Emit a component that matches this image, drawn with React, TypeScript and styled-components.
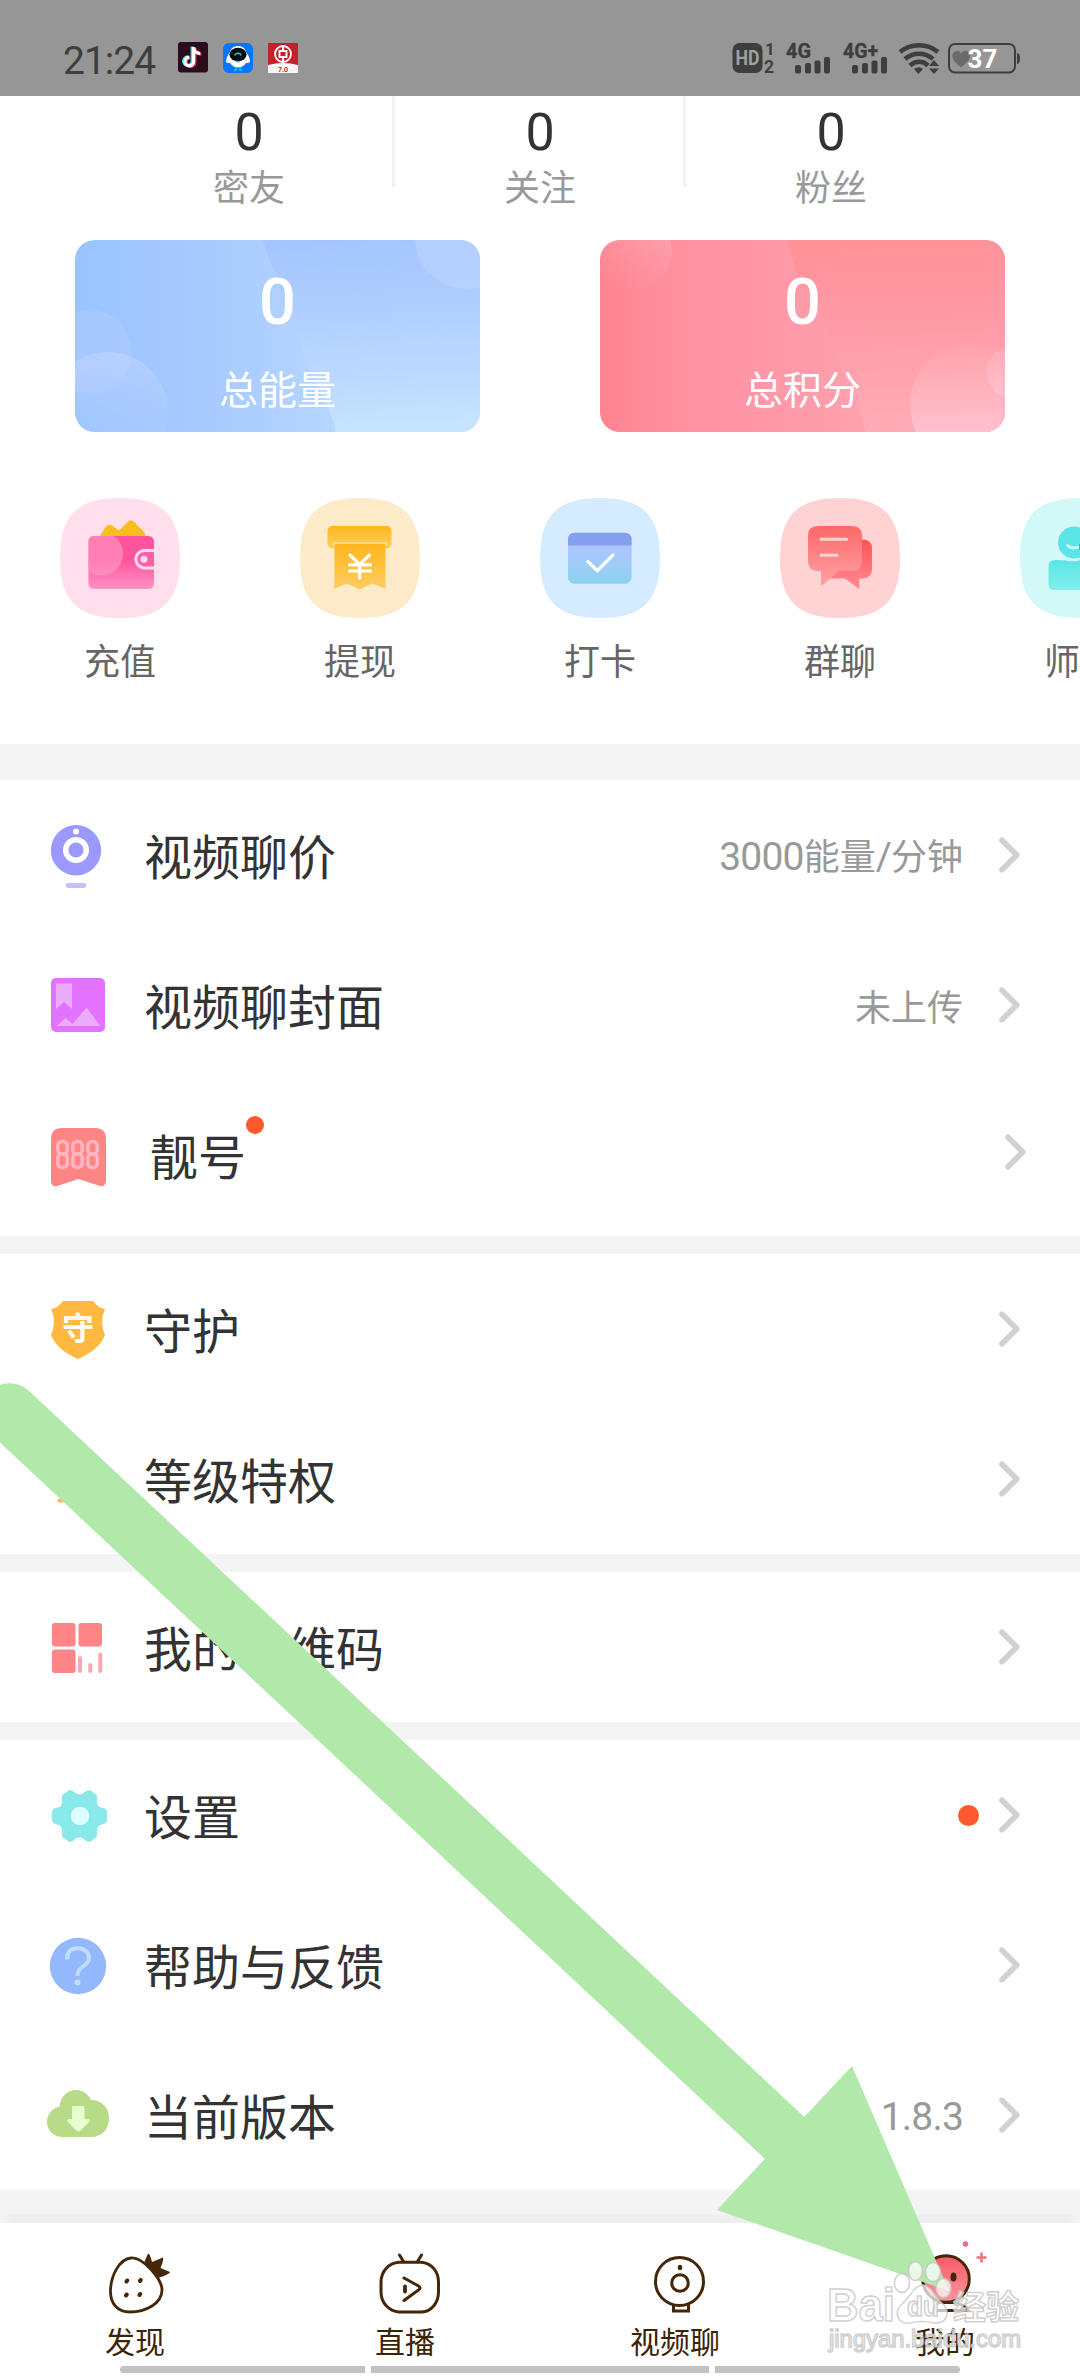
import React from "react";
import styled, { createGlobalStyle } from "styled-components";

const CJK = `"Noto Sans CJK SC", "Noto Sans", sans-serif`;
const LATIN = `Roboto, "Noto Sans CJK SC", sans-serif`;

const GlobalStyle = createGlobalStyle`
  html, body { margin: 0; padding: 0; background: #fff; }
  * { box-sizing: border-box; }
  body { font-family: ${CJK}; }
  svg { display: block; flex: none; }
`;

const Screen = styled.main`
  position: relative;
  width: 1080px;
  height: 2376px;
  display: flex;
  flex-direction: column;
  overflow: hidden;
  background: #fff;
`;

/* ---------- status bar ---------- */

const StatusBar = styled.header`
  display: flex;
  justify-content: space-between;
  height: 96px;
  flex: none;
  padding: 42px 60px 0 63px;
  background: #969696;
  color: #3e3e3e;
`;

const StatusGroup = styled.div<{ $gap: number }>`
  display: flex;
  align-items: flex-start;
  gap: ${(p) => p.$gap}px;
`;

const Clock = styled.span`
  width: 100px;
  font: 400 39px/38px ${LATIN};
  letter-spacing: -1px;
  white-space: nowrap;
`;

const StatusIcons = styled.div`
  display: flex;
  padding-top: 1px;
  svg { overflow: visible; }
`;

/* ---------- profile statistics ---------- */

const Stats = styled.section`
  display: flex;
  justify-content: center;
  height: 144px;
  flex: none;
`;

const Stat = styled.div`
  width: 291px;
  display: flex;
  flex-direction: column;
  align-items: center;
  background: linear-gradient(#f3f3f3, #f3f3f3) right top / 3px 91px no-repeat;
  &:last-child { background: none; }
`;

const StatValue = styled.span`
  height: 62px;
  margin-top: 6px;
  font: 400 52px/62px ${LATIN};
  color: #333;
`;

const StatLabel = styled.span`
  font-size: 36px;
  line-height: 42px;
  color: #999;
`;

/* ---------- balance cards ---------- */

const Cards = styled.section`
  display: flex;
  justify-content: space-between;
  padding: 0 75px;
  height: 192px;
  flex: none;
`;

const Card = styled.div`
  width: 405px;
  height: 192px;
  border-radius: 20px;
  overflow: hidden;
  display: grid;
  & > * { grid-area: 1 / 1; }
`;

const CardText = styled.div`
  z-index: 1;
  display: flex;
  flex-direction: column;
  align-items: center;
  color: #fff;
`;

const CardValue = styled.span`
  margin-top: 24px;
  font: 500 65px/77px ${LATIN};
`;

const CardLabel = styled.span`
  margin-top: 23px;
  font-size: 39px;
  line-height: 46px;
`;

/* ---------- shortcuts ---------- */

const Shortcuts = styled.section`
  display: flex;
  height: 312px;
  flex: none;
  padding-top: 66px;
  overflow: hidden;
`;

const Shortcut = styled.div`
  flex: none;
  width: 240px;
  display: flex;
  flex-direction: column;
  align-items: center;
  gap: 20px;
  font-size: 36px;
  line-height: 42px;
  color: #666;
`;

/* ---------- menu ---------- */

const Band = styled.div<{ $h: number }>`
  height: ${(p) => p.$h}px;
  flex: none;
  background: #f4f4f4;
`;

const Group = styled.section<{ $pad?: number }>`
  flex: none;
  padding-bottom: ${(p) => p.$pad ?? 0}px;
`;

const Row = styled.div<{ $shift?: number }>`
  height: 150px;
  display: flex;
  align-items: center;
  padding: 0 ${(p) => 60 - (p.$shift ?? 0)}px 0 45px;
`;

const RowIcon = styled.div`
  width: 66px;
  height: 66px;
  flex: none;
`;

const RowLabel = styled.span<{ $shift?: number }>`
  margin-left: ${(p) => 33 + (p.$shift ?? 0)}px;
  padding-bottom: 3px;
  font-size: 48px;
  line-height: 60px;
  color: #333;
  white-space: nowrap;
`;

const LabelDot = styled.i`
  align-self: flex-start;
  margin: 36px 0 0 0;
  width: 18px;
  height: 18px;
  border-radius: 50%;
  background: #ff5a2d;
`;

const Trail = styled.div`
  margin-left: auto;
  display: flex;
  align-items: center;
`;

const Value = styled.span`
  margin-right: 36px;
  font-size: 36px;
  line-height: 48px;
  color: #999;
  white-space: nowrap;
`;

const Num = styled.span`
  font-family: ${LATIN};
  font-size: 39px;
  letter-spacing: -0.8px;
`;

const Alert = styled.i`
  width: 21px;
  height: 21px;
  margin-right: 20px;
  border-radius: 50%;
  background: #ff5a2d;
`;

const ChevronBox = styled.div<{ $lift?: number }>`
  padding-bottom: ${(p) => p.$lift ?? 0}px;
`;

/* ---------- bottom navigation ---------- */

const NavShadow = styled.div`
  height: 8px;
  flex: none;
  background: linear-gradient(90deg, #f4f4f4, #eee 14px, #eee 1066px, #f4f4f4);
`;

const Nav = styled.nav`
  display: flex;
  height: 153px;
  flex: none;
`;

const Tab = styled.div`
  width: 270px;
  padding-top: 24px;
  display: flex;
  flex-direction: column;
  align-items: center;
  font-size: 30px;
  line-height: 36px;
  color: #3d2305;
  svg { margin: 0 0 3px 9px; overflow: visible; }
`;

const Indicator = styled.div`
  position: absolute;
  left: 120px;
  bottom: 3px;
  width: 840px;
  height: 7px;
  display: grid;
  grid-template-columns: 245px 338px 245px;
  gap: 6px;
  border-radius: 4px;
  overflow: hidden;
  i { background: #c2c2c2; }
`;

/* ---------- overlays ---------- */

const ArrowLayer = styled.svg`
  position: absolute;
  left: 0;
  top: 1370px;
`;

const WatermarkLayer = styled.svg`
  position: absolute;
  left: 820px;
  top: 2250px;
`;

/* ---------- drawings ---------- */

const DouyinIcon = () => (
  <svg width="30" height="31" viewBox="0 0 30 31">
    <rect width="30" height="30.500" rx="3" fill="#2b0b1c" />
    <g fill="none" strokeWidth="3.200">
      <path d="M15.200 5v14.500a4.300 4.300 0 1 1-4.300-4.300M15.200 6c.6 3.600 3 5.400 6.600 5.400" stroke="#2bf0ee" transform="translate(-1 -.4)" />
      <path d="M16 5v14.500a4.300 4.300 0 1 1-4.300-4.300M16 6c.6 3.600 3 5.400 6.600 5.400" stroke="#fb2c55" transform="translate(.8 .8)" />
      <path d="M15.600 5v14.500a4.300 4.300 0 1 1-4.300-4.300M15.600 6c.6 3.600 3 5.400 6.600 5.400" stroke="#fff" />
    </g>
  </svg>
);

const RobotIcon = () => (
  <svg width="30" height="31" viewBox="0 0 30 31">
    <rect y="1" width="30" height="30" rx="6" fill="#0875ff" />
    <path d="M7 10C8 6 11 4 15 4s7 2 8 6c3 4 4 7 4 10-1 1-3 1-4 1-2 3-5 4.500-8 4.500S9 24 7 21c-1 0-3 0-4-1 0-3 1-6 4-10z" fill="#fff" />
    <ellipse cx="15" cy="12.500" rx="8.600" ry="6.800" fill="#050a0d" />
    <path d="M12 13.500c.5-3 5.500-3 6 0" stroke="#20c4c9" strokeWidth="1.500" fill="none" />
    <path d="M13 19.500h4M13 25v2.500m4-2.500v2.500M11 28h3m2 0h3" stroke="#19c8d6" strokeWidth="1.600" />
  </svg>
);

const BankIcon = () => (
  <svg width="30" height="31" viewBox="0 0 30 31">
    <rect y="1" width="30" height="30" fill="#c3202b" />
    <path d="M0 23q15-4 30 0v8H0z" fill="#f5f5f5" />
    <circle cx="15" cy="12" r="8" fill="none" stroke="#fff" strokeWidth="1.900" />
    <path d="M15 4v4.500m0 7V20M11.500 9h7v6h-7z" fill="none" stroke="#fff" strokeWidth="1.900" />
    <text x="15" y="29.500" textAnchor="middle" fontFamily="Roboto, sans-serif" fontWeight="700" fontSize="7" fill="#b3323a">7.0</text>
  </svg>
);

const Signal = ({ x, label }: { x: number; label: string }) => (
  <g transform={`translate(${x} 0)`}>
    <text x="0" y="15" fontFamily="Roboto, sans-serif" fontWeight="700" fontSize="21" textLength={label.length > 2 ? 35 : 25} lengthAdjust="spacingAndGlyphs" stroke="#3e3e3e" strokeWidth="0.400">{label}</text>
    <rect x="9" y="22" width="6" height="8.500" rx="2" />
    <rect x="19" y="20" width="6" height="10.500" rx="2" />
    <rect x="28.500" y="17.500" width="6" height="13" rx="2" />
    <rect x="38" y="14" width="6" height="16.500" rx="2" />
  </g>
);

const Connectivity = () => (
  <svg width="288" height="31" viewBox="0 0 288 31" fill="#3e3e3e">
    <rect x="0.500" width="30" height="30" rx="7" />
    <text x="15.500" y="22" textAnchor="middle" fontFamily="Roboto, sans-serif" fontWeight="700" fontSize="19.500" fill="#a0a0a0" textLength="24" lengthAdjust="spacingAndGlyphs">HD</text>
    <text x="33" y="12" fontFamily="Roboto, sans-serif" fontWeight="700" fontSize="17">1</text>
    <text x="32" y="29.500" fontFamily="Roboto, sans-serif" fontWeight="700" fontSize="17.500">2</text>
    <Signal x={54} label="4G" />
    <Signal x={111} label="4G+" />
    <g fill="none" stroke="#3e3e3e" strokeWidth="4.600">
      <path d="M168 9c11-9 27-9 38 0" />
      <path d="M173 16c8-7 20-7 28 0" />
      <path d="M178 22.500c5.500-5 13-5 18 0" />
    </g>
    <path d="M182 26q5-3.500 9 0l-4.500 5zM197 23l5-6 5 6zM197 25.500l5 5.500 5-5.500z" />
    <rect x="217" y="1" width="66" height="28.500" rx="6" fill="none" stroke="#3e3e3e" strokeWidth="2" />
    <path d="M285 10q3 .5 3 5.500t-3 5.500z" />
    <path d="M229 24c-11-7-10-14-5-16q4-1 5 3 2-4 6-3c5 2 5 9-6 16z" fill="#6b6b6b" />
    <text x="235.500" y="24.500" fontFamily="Roboto, sans-serif" fontWeight="700" fontSize="26" fill="#fff">37</text>
  </svg>
);

const EnergyArt = () => (
  <svg width="405" height="192" viewBox="0 0 405 192">
    <defs>
      <linearGradient id="eL" x1="0" x2=".65"><stop stopColor="#98c4ff" /><stop offset=".35" stopColor="#a4c7ff" /><stop offset="1" stopColor="#b5d6ff" /></linearGradient>
      <linearGradient id="eR" x1="0" y1="0" x2=".06" y2="1"><stop stopColor="#a3c5ff" /><stop offset=".45" stopColor="#b1d0ff" /><stop offset="1" stopColor="#c5e2ff" /></linearGradient>
      <linearGradient id="eC" x1="0" y1="0" x2="0" y2="1"><stop stopColor="#c5d8ff" stopOpacity=".5" /><stop offset="1" stopColor="#b3cdff" stopOpacity="0.050" /></linearGradient>
    </defs>
    <rect width="405" height="192" fill="url(#eL)" />
    <path d="M188 0H405V192H261C255 160 230 130 221 90C214 60 197 35 188 0z" fill="url(#eR)" />
    <circle cx="15" cy="112" r="42" fill="#b4ccff" fillOpacity=".45" />
    <circle cx="33" cy="172" r="60" fill="url(#eC)" />
    <circle cx="392" cy="-4" r="53" fill="#bbd6ff" fillOpacity=".55" />
  </svg>
);

const PointsArt = () => (
  <svg width="405" height="192" viewBox="0 0 405 192">
    <defs>
      <linearGradient id="pL" x1="0" x2=".7"><stop stopColor="#ff8490" /><stop offset=".35" stopColor="#ff92a2" /><stop offset="1" stopColor="#ffa2ae" /></linearGradient>
      <linearGradient id="pR" x1="0" y1="0" x2=".04" y2="1"><stop stopColor="#ff9097" /><stop offset=".5" stopColor="#ff9ca8" /><stop offset="1" stopColor="#ffacb6" /></linearGradient>
      <linearGradient id="pC" x1=".8" y1="0" x2=".3" y2="1"><stop stopColor="#ffb5bd" stopOpacity=".7" /><stop offset="1" stopColor="#ff8e9b" stopOpacity=".1" /></linearGradient>
      <linearGradient id="pD" x1="0" y1="0" x2="0" y2="1"><stop stopColor="#ffb5bd" stopOpacity=".1" /><stop offset=".75" stopColor="#ffc1d0" /></linearGradient>
      <linearGradient id="pS" x1="0" y1="0" x2="0" y2="1"><stop stopColor="#ffb5c2" stopOpacity=".4" /><stop offset="1" stopColor="#ffc1cc" /></linearGradient>
    </defs>
    <rect width="405" height="192" fill="url(#pL)" />
    <path d="M188 0H405V192H266C258 160 240 125 230 95C219 60 194 45 188 0z" fill="url(#pR)" />
    <circle cx="34" cy="12" r="38" fill="url(#pC)" />
    <circle cx="372" cy="165" r="62" fill="url(#pD)" />
    <circle cx="414" cy="132" r="27" fill="url(#pS)" />
  </svg>
);

const Tile = ({ color, children }: { color: string; children: React.ReactNode }) => (
  <svg width="120" height="120" viewBox="0 0 120 120">
    <path d="M60 0C102.700 0 120 17.300 120 60S102.700 120 60 120 0 102.700 0 60 17.300 0 60 0z" fill={color} />
    {children}
  </svg>
);

const WalletIcon = () => (
  <Tile color="#ffdfec">
    <defs><linearGradient id="wa" x1="0" y1="0" x2="0" y2="1"><stop offset=".45" stopColor="#ff539d" /><stop offset="1" stopColor="#ff94c5" /></linearGradient></defs>
    <path d="M40 38l6-9.500q2.500-3 6-1l7 5 9-8.700q3-3 6 0L85 35v3z" fill="#f9bd1d" />
    <rect x="28.500" y="38" width="65.500" height="53" rx="5.500" fill="url(#wa)" />
    <path d="M34 38H54A20.500 20.500 0 0 1 28.500 73.500V43.500A5.500 5.500 0 0 1 34 38z" fill="#ff9cc3" fillOpacity=".6" />
    <path d="M94 52.500H84.500a8.700 8.700 0 0 0 0 17.400H94" fill="#ff5fa5" stroke="#ffdfec" strokeWidth="3" />
    <circle cx="84" cy="61.300" r="3.500" fill="#ffdfec" />
  </Tile>
);

const WithdrawIcon = () => (
  <Tile color="#fdeac8">
    <defs><linearGradient id="wi" x1="0" y1="0" x2="0" y2="1"><stop stopColor="#ffb71c" /><stop offset="1" stopColor="#fdcc60" /></linearGradient></defs>
    <rect x="27.500" y="28" width="64" height="22.500" rx="5" fill="url(#wi)" />
    <path d="M34.400 45.500H85.400V91q-7-3.500-13-5.500L59.600 91.500 47 85.500Q40 88 34.400 91z" fill="url(#wi)" />
    <path d="M34 48v-3H86v3" fill="none" stroke="#fee0a0" strokeWidth="1.600" />
    <path d="M50 57l9.700 9.500L69.500 57M59.700 66.500V80M49.500 66.800H70.500M49.500 73H70.500" fill="none" stroke="#fff" strokeWidth="3.200" strokeLinecap="round" />
  </Tile>
);

const CheckInIcon = () => (
  <Tile color="#d5ecff">
    <defs><linearGradient id="ca" x1="0" y1="0" x2="0" y2="1"><stop offset=".25" stopColor="#aec5ff" /><stop offset="1" stopColor="#8bd3f1" /></linearGradient></defs>
    <rect x="28" y="34.700" width="63.600" height="51" rx="6.500" fill="url(#ca)" />
    <path d="M28 47.500V41.200a6.500 6.500 0 0 1 6.500-6.500H85a6.500 6.500 0 0 1 6.500 6.500V47.500z" fill="#839fee" />
    <path d="M47.800 63.500L57.300 72.700 73 57" fill="none" stroke="#fff" strokeWidth="3.200" strokeLinecap="round" />
  </Tile>
);

const GroupChatIcon = () => (
  <Tile color="#ffd2d3">
    <defs>
      <linearGradient id="g1" x1="0" y1="0" x2="0" y2="1"><stop stopColor="#fd6869" /><stop offset="1" stopColor="#ffa3a4" /></linearGradient>
      <linearGradient id="g2" x1="0" y1="0" x2="0" y2="1"><stop stopColor="#ff5356" /><stop offset="1" stopColor="#ff8a94" /></linearGradient>
    </defs>
    <path d="M60 41.500H82q10 0 10 9V71q0 9.500-10 9.500h-2.800V91L65 80.500H50z" fill="url(#g2)" />
    <path d="M38 28H72q10 0 10 10V63q0 10-10 10H59L41 88.500V73H38q-10 0-10-10V38q0-10 10-10z" fill="url(#g1)" />
    <path d="M41 41.300H66.500M41 57.300H57" stroke="#ffd2d3" strokeWidth="3" strokeLinecap="round" />
  </Tile>
);

const MentorIcon = () => (
  <Tile color="#d2f9f7">
    <defs><linearGradient id="me" x1="0" y1="0" x2="0" y2="1"><stop stopColor="#59e5e5" /><stop offset="1" stopColor="#83eeec" /></linearGradient></defs>
    <circle cx="54" cy="44.500" r="16" fill="#5ce5e6" />
    <path d="M28.500 68q0-6 7-6 9 0 12 1 7 1 13-1h30V92H35q-6.500 0-6.500-6z" fill="url(#me)" />
    <path d="M47.500 47.500q6 5 14 0" fill="none" stroke="#c5faf7" strokeWidth="3" strokeLinecap="round" />
    <path d="M60 46v6" stroke="#3fb3b8" strokeWidth="2" />
  </Tile>
);

/* Every row icon is drawn in the same 66px box. */
const Glyph = ({ children }: { children: React.ReactNode }) => (
  <svg width="66" height="66" viewBox="0 0 66 66">{children}</svg>
);

const CameraPriceIcon = () => (
  <Glyph>
    <circle cx="31" cy="28.300" r="25.200" fill="#9b98ff" />
    <circle cx="31" cy="28" r="10.300" fill="none" stroke="#fff" strokeWidth="5.400" />
    <circle cx="31" cy="9.500" r="3" fill="#fff" />
    <rect x="21" y="61" width="20" height="5" rx="2" fill="#c5c1f8" />
  </Glyph>
);

const CoverIcon = () => (
  <Glyph>
    <rect x="6" y="6" width="54" height="54" rx="5" fill="#e272ff" />
    <path d="M11 11.500H27V37L19 30l-8 7zM11.500 54l9-8 7 6L41.500 35.500 55.500 54z" fill="#ebabf8" />
  </Glyph>
);

const LuckyIcon = () => (
  <Glyph>
    <path d="M17 6H50Q61 6 61 17V60q-1 5-6 4L33.500 57 12 64q-5 1-6-4V17Q6 6 17 6z" fill="#ff8484" />
    <g fill="none" stroke="#ffb6c2" strokeWidth="3.600">
      {[12.8, 27.8, 42.8].map((x) => (
        <g key={x}>
          <rect x={x} y="19.500" width="9.500" height="12.500" rx="4.300" />
          <rect x={x} y="32" width="9.500" height="13.500" rx="4.300" />
        </g>
      ))}
    </g>
  </Glyph>
);

const GuardIcon = () => (
  <Glyph>
    <path d="M18 5H48Q53 12 60 13Q54 26 60 39Q54 54 33 63Q12 54 6 39Q12 26 6 13Q13 12 18 5z" fill="#ffb940" />
    <text x="33" y="43.500" textAnchor="middle" fontFamily={CJK} fontWeight="700" fontSize="32" fill="#fffdf4">守</text>
  </Glyph>
);

const LevelIcon = () => (
  <Glyph>
    <path d="M14.500 54.500H52" stroke="#ffb45f" strokeWidth="4" strokeLinecap="round" />
  </Glyph>
);

const QrIcon = () => (
  <Glyph>
    <g fill="#ff8485">
      <rect x="7" y="9" width="23.500" height="23.500" rx="3" />
      <rect x="33.500" y="9" width="23.500" height="23.500" rx="3" />
      <rect x="7" y="35.500" width="23.500" height="23.500" rx="3" />
    </g>
    <path d="M35 44v13M45.200 51v6M55.200 40.500V57" stroke="#ffa7b0" strokeWidth="4" strokeLinecap="round" />
  </Glyph>
);

const SettingsIcon = () => (
  <Glyph>
    <path d="M22 9.500Q25 7 28.500 9.500Q34.500 15 40.500 9.500Q44 7 47 9.500L50.500 12Q53 14 52 18Q51 25 58.500 26Q61.500 26.500 62 30V38Q61.500 41.500 58.500 42Q50.500 43.500 52 50Q53 54 50.500 56L47 58.500Q44 61 40.500 58.500Q34.500 52 28.500 58.500Q25 61 22 58.500L18.500 56Q16 54 17 50Q18 43.500 10.500 42Q7.500 41.500 7 38V30Q7.500 26.500 10.500 26Q18.500 25 17 18Q16 14 18.500 12z" fill="#89e8e9" />
    <circle cx="35" cy="34" r="9.300" fill="#dcfcff" />
  </Glyph>
);

const HelpIcon = () => (
  <Glyph>
    <circle cx="33" cy="34" r="28.200" fill="#93b9fc" />
    <path d="M22 27.500C22 19 27 16.300 33 16.300S44 20 44 26C44 35 32.500 33 32.500 44" fill="none" stroke="#c1dcff" strokeWidth="4" />
    <circle cx="32.500" cy="50.500" r="3" fill="#c1dcff" />
  </Glyph>
);

const VersionIcon = () => (
  <Glyph>
    <path d="M18 55C8 55 2 48 2 40C2 32 7 26 14.500 25C15 15 22 8 31 8C38 8 43 12 46 18C57 18 64 26 64 36C64 47 57 55 46 55z" fill="#b8db88" />
    <path d="M29 24H38q1.500 0 1.500 2V37H44q1.500 1.500 0 3L35 49q-1.500 1-3 0L22.500 39.500q-1-1.500.5-2.500H27V26q0-2 2-2z" fill="#e8ffd0" />
  </Glyph>
);

const Chevron = () => (
  <svg width="21" height="36" viewBox="0 0 21 36">
    <path d="M3 3.200L17.800 18 3 32.800" fill="none" stroke="#d2d0d1" strokeWidth="5.600" strokeLinecap="round" strokeLinejoin="round" />
  </svg>
);

const BROWN = "#432708";

const StrawberryIcon = () => (
  <svg width="62" height="72" viewBox="0 0 62 72" fill="none" stroke={BROWN} strokeWidth="2.800">
    <path d="M22 11C34 10 53 32 53 43C53 57 36 65 21 65C8 65 1 56 1.500 43C2 29 10 12 22 11z" />
    <path d="M35 16L39 6.500Q41 6.500 43 15L54 10.500Q55 13 51.500 21L61 25Q61 27 49 31Q44 21 35 16z" fill={BROWN} stroke="none" />
    <g strokeWidth="4" strokeLinecap="round"><path d="M17.500 34.500l.7-1M31 34l.7-1M17 48.500l.7-1M30.500 48l.7-1" /></g>
  </svg>
);

const LiveIcon = () => (
  <svg width="62" height="72" viewBox="0 0 62 72" fill="none" stroke={BROWN} strokeWidth="3" strokeLinecap="round">
    <path d="M20 15.300H42C53 16 59.500 25 59.500 35V45C59.500 56 52 64.500 43 65H20C10 64 2 56 2 45V35C2 25 9 16 20 15.300z" />
    <path d="M20.500 8l4 6.500M42.500 8l-4 6.500M25 31l14.500 8q3 2 0 4L25 53.500" />
    <path d="M26 39.500v5" strokeWidth="3.800" />
  </svg>
);

const VideoIcon = () => (
  <svg width="62" height="72" viewBox="0 0 62 72" fill="none" stroke={BROWN} strokeWidth="3">
    <circle cx="30.500" cy="34.500" r="24" />
    <circle cx="31" cy="36" r="8.300" />
    <path d="M31 20v1" strokeWidth="4.500" strokeLinecap="round" />
    <path d="M24.500 57.500V64H39.500V57.500" />
  </svg>
);

const MineIcon = () => (
  <svg width="62" height="72" viewBox="0 0 62 72" fill="none" stroke={BROWN} strokeWidth="3">
    <defs><linearGradient id="mi" x1="0" y1="0" x2="0" y2="1"><stop stopColor="#fa5a65" /><stop offset="1" stopColor="#fd949f" /></linearGradient></defs>
    <circle cx="27" cy="32" r="23.300" fill="url(#mi)" />
    <ellipse cx="34.500" cy="30" rx="3" ry="4.500" fill={BROWN} stroke="none" />
    <path d="M15 63.500q0-8 6-8H34q9 0 15 8H14" fill="#fff" />
    <circle cx="46.500" cy="-3" r="2.800" fill="#f36d7b" stroke="none" />
    <path d="M62.500 5.500v10M57.500 10.500h10" stroke="#f36d7b" strokeWidth="2.500" />
  </svg>
);

const Watermark = () => (
  <WatermarkLayer width="210" height="110" viewBox="0 0 210 110">
    <g fill="#fff" fillOpacity=".72" stroke="#c4c4c4" strokeOpacity=".8" strokeWidth="1.500">
      <text x="7" y="70.500" fontFamily="Liberation Sans, sans-serif" fontWeight="700" fontSize="46" textLength="68" lengthAdjust="spacingAndGlyphs">Bai</text>
      <ellipse cx="82" cy="33" rx="7.500" ry="9.500" />
      <ellipse cx="95.500" cy="21" rx="7" ry="9.500" />
      <ellipse cx="113" cy="22" rx="7.500" ry="9.500" />
      <ellipse cx="123.500" cy="38" rx="7.500" ry="9.500" />
      <path d="M103 35C112 36 115 48 123 54C131 62 127 74 114 73C106 71 98 71 90 73C78 75 73 62 82 54C90 48 93 36 103 35z" />
      <text x="87" y="66" fontFamily="Liberation Sans, sans-serif" fontWeight="700" fontSize="27" textLength="32" lengthAdjust="spacingAndGlyphs">du</text>
      <text x="133" y="69" fontFamily={CJK} fontWeight="700" fontSize="33">经验</text>
      <text x="9" y="97" fontFamily="Liberation Sans, sans-serif" fontSize="23" textLength="192" lengthAdjust="spacingAndGlyphs">jingyan.baidu.com</text>
    </g>
  </WatermarkLayer>
);

/* ---------- page ---------- */

type Item = {
  icon: React.ReactNode;
  label: string;
  value?: React.ReactNode;
  labelDot?: boolean;
  alert?: boolean;
};

const MenuRow = ({ icon, label, value, labelDot, alert }: Item) => (
  <Row $shift={labelDot ? 6 : 0}>
    <RowIcon>{icon}</RowIcon>
    <RowLabel $shift={labelDot ? 6 : 0}>{label}</RowLabel>
    {labelDot && <LabelDot />}
    <Trail>
      {value && <Value>{value}</Value>}
      {alert && <Alert />}
      <ChevronBox $lift={labelDot ? 6 : 0}><Chevron /></ChevronBox>
    </Trail>
  </Row>
);

const stats = ["密友", "关注", "粉丝"];

const shortcuts = [
  { label: "充值", icon: <WalletIcon /> },
  { label: "提现", icon: <WithdrawIcon /> },
  { label: "打卡", icon: <CheckInIcon /> },
  { label: "群聊", icon: <GroupChatIcon /> },
  { label: "师徒", icon: <MentorIcon /> },
];

const tabs = [
  { label: "发现", icon: <StrawberryIcon /> },
  { label: "直播", icon: <LiveIcon /> },
  { label: "视频聊", icon: <VideoIcon /> },
  { label: "我的", icon: <MineIcon /> },
];

export default function App() {
  return (
    <Screen>
      <GlobalStyle />
      <StatusBar>
        <StatusGroup $gap={15}>
          <Clock>21:24</Clock>
          <DouyinIcon />
          <RobotIcon />
          <BankIcon />
        </StatusGroup>
        <StatusIcons><Connectivity /></StatusIcons>
      </StatusBar>

      <Stats>
        {stats.map((s) => (
          <Stat key={s}>
            <StatValue>0</StatValue>
            <StatLabel>{s}</StatLabel>
          </Stat>
        ))}
      </Stats>

      <Cards>
        <Card>
          <EnergyArt />
          <CardText><CardValue>0</CardValue><CardLabel>总能量</CardLabel></CardText>
        </Card>
        <Card>
          <PointsArt />
          <CardText><CardValue>0</CardValue><CardLabel>总积分</CardLabel></CardText>
        </Card>
      </Cards>

      <Shortcuts>
        {shortcuts.map((s) => (
          <Shortcut key={s.label}>{s.icon}<span>{s.label}</span></Shortcut>
        ))}
      </Shortcuts>

      <Band $h={36} />
      <Group $pad={6}>
        <MenuRow icon={<CameraPriceIcon />} label="视频聊价" value={<><Num>3000</Num>能量<Num>/</Num>分钟</>} />
        <MenuRow icon={<CoverIcon />} label="视频聊封面" value="未上传" />
        <MenuRow icon={<LuckyIcon />} label="靓号" labelDot />
      </Group>
      <Band $h={18} />
      <Group>
        <MenuRow icon={<GuardIcon />} label="守护" />
        <MenuRow icon={<LevelIcon />} label="等级特权" />
      </Group>
      <Band $h={18} />
      <Group>
        <MenuRow icon={<QrIcon />} label="我的二维码" />
      </Group>
      <Band $h={18} />
      <Group>
        <MenuRow icon={<SettingsIcon />} label="设置" alert />
        <MenuRow icon={<HelpIcon />} label="帮助与反馈" />
        <MenuRow icon={<VersionIcon />} label="当前版本" value={<Num>1.8.3</Num>} />
      </Group>
      <Band $h={25} />
      <NavShadow />

      <Nav>
        {tabs.map((t) => (
          <Tab key={t.label}>{t.icon}<span>{t.label}</span></Tab>
        ))}
      </Nav>
      <Indicator><i /><i /><i /></Indicator>

      <ArrowLayer width="1080" height="940" viewBox="0 1370 1080 940">
        <path d="M9.500 1412L790 2143" stroke="#b0e9a9" strokeWidth="57.500" strokeLinecap="round" />
        <path d="M852 2066L949 2291 717 2210z" fill="#b0e9a9" />
      </ArrowLayer>
      <Watermark />
    </Screen>
  );
}
